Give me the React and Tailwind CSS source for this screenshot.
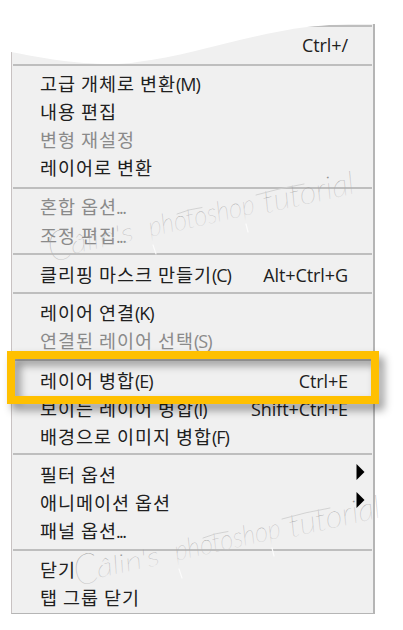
const groups = [
  {
    box: "h-[121px] pt-[3px]",
    row: "h-7",
    items: [
      { label: "고급 개체로 변환", hotkey: "(M)" },
      { label: "내용 편집" },
      { label: "변형 재설정", disabled: true },
      { label: "레이어로 변환" },
    ],
  },
  {
    box: "h-16 pt-[3px]",
    row: "h-[29px]",
    items: [
      { label: "혼합 옵션", hotkey: "...", disabled: true },
      { label: "조정 편집", hotkey: "...", disabled: true },
    ],
  },
  {
    box: "h-[37px] pt-[5px]",
    row: "h-7",
    items: [{ label: "클리핑 마스크 만들기", hotkey: "(C)", shortcut: "Alt+Ctrl+G" }],
  },
  {
    box: "h-[65px] pt-[4px]",
    row: "h-7",
    items: [
      { label: "레이어 연결", hotkey: "(K)" },
      { label: "연결된 레이어 선택", hotkey: "(S)", disabled: true },
    ],
  },
  {
    box: "h-[92px] pt-[5px]",
    row: "h-7",
    items: [
      { label: "레이어 병합", hotkey: "(E)", shortcut: "Ctrl+E", selected: true },
      { label: "보이는 레이어 병합", hotkey: "(I)", shortcut: "Shift+Ctrl+E" },
      { label: "배경으로 이미지 병합", hotkey: "(F)" },
    ],
  },
  {
    box: "h-[94px] pt-[5px]",
    row: "h-7",
    items: [
      { label: "필터 옵션", submenu: true },
      { label: "애니메이션 옵션", submenu: true },
      { label: "패널 옵션", hotkey: "..." },
    ],
  },
  {
    box: "h-[62px] pt-[4px]",
    row: "h-7",
    items: [{ label: "닫기" }, { label: "탭 그룹 닫기" }],
  },
];

function Separator() {
  return <div className="mx-px h-[2px] shrink-0 bg-[#bebebe]" />;
}

function MenuItem({ item, row }) {
  return (
    <div
      className={`relative flex items-center justify-between pr-[25px] pl-7 whitespace-nowrap ${row} ${
        item.disabled ? "text-[#8a8a8a]" : "text-[#202020]"
      }`}
    >
      <span className="flex items-baseline leading-none">
        <span className="text-[18.5px] tracking-[0.95px]">{item.label}</span>
        {item.hotkey && (
          <span
            className={
              item.hotkey === "..."
                ? "-ml-px font-['Open_Sans'] text-[18px] tracking-[-1.6px]"
                : "font-['Open_Sans'] text-[18px] tracking-[-1px]"
            }
          >
            {item.hotkey}
          </span>
        )}
      </span>
      {item.shortcut && (
        <span className="pt-px font-['Open_Sans'] text-[18px] leading-none tracking-[-0.1px]">{item.shortcut}</span>
      )}
      {item.submenu && (
        <svg className="absolute top-[4px] right-[8px]" width="9" height="16" viewBox="0 0 9 16">
          <path d="M0.5 0L8.5 8L0.5 16Z" fill="#000" />
        </svg>
      )}
      {item.selected && (
        <div className="absolute -top-[15px] -left-[5px] z-10 h-[53px] w-[372px] border-x-[8px] border-y-[8px] border-[#ffc000] drop-shadow-[5px_6px_4px_rgba(0,0,0,0.4)]" />
      )}
    </div>
  );
}

function Watermark({ id, x, y }) {
  return (
    <g transform={`translate(${x} ${y})`}>
      <defs>
        <linearGradient id={id} x1="0" y1="0" x2="0" y2="1">
          <stop offset="0.2" stopColor="#8c8c8c" />
          <stop offset="0.75" stopColor="#b8b8b8" />
          <stop offset="1" stopColor="#f4f4f4" />
        </linearGradient>
      </defs>
      <g
        transform="rotate(-12.5)"
        fill={`url(#${id})`}
        fontFamily="Lato, sans-serif"
        fontStyle="italic"
        fontWeight="100"
      >
        <text x="0" y="3" fontSize="42" textLength="24" lengthAdjust="spacingAndGlyphs">C</text>
        <text x="23" y="0" fontSize="26" textLength="64" lengthAdjust="spacingAndGlyphs">âlin's</text>
        <text x="103" y="0" fontSize="28" textLength="108" lengthAdjust="spacingAndGlyphs">photoshop</text>
        <text x="220" y="2" fontSize="32" textLength="93" lengthAdjust="spacingAndGlyphs">tutorial</text>
      </g>
      {/* pen flourishes */}
      <g fill="none" strokeLinecap="round">
        <path d="M127 -45Q139 -50 152 -51.5M206 -64Q230 -71 254 -75" stroke="#cfcfcf" strokeWidth="0.9" />
        <path d="M103 -14L106 -5M196 -35L198 -27" stroke="#fcfcfc" strokeWidth="1.1" />
      </g>
    </g>
  );
}

export default function App() {
  return (
    <div className="relative h-[630px] w-[403px] overflow-hidden bg-white pt-6 pl-[11px] font-['Noto_Sans_CJK_KR',sans-serif]">
      <div className="flex h-[590px] w-[364px] flex-col border-r-2 border-b border-l border-[#b5b5b5] border-l-[#c8c2c2] bg-[#f0f0f0]">
        <div className="flex h-10 shrink-0 flex-col pt-px">
          <Separator />
          <div className="flex h-[37px] items-center justify-end pr-[25px] font-['Open_Sans'] text-[18px] tracking-[-0.1px] text-[#202020]">
            Ctrl+/
          </div>
        </div>
        {groups.map((group) => (
          <div key={group.items[0].label} className="shrink-0">
            <Separator />
            <div className={group.box}>
              {group.items.map((item) => (
                <MenuItem key={item.label} item={item} row={group.row} />
              ))}
            </div>
          </div>
        ))}
      </div>

      {/* torn top edge and signature over the menu */}
      <svg className="pointer-events-none absolute inset-0" width="403" height="630" viewBox="0 0 403 630">
        <path d="M0 0H403V23H371C345 24 327 25 307 27C250 34 190 56 137 62C122 65 100 64 84 63C57 61 33 56 11 52H0Z" fill="#fff" />
        <Watermark id="inkTop" x={50} y={259} />
        <Watermark id="inkBottom" x={76} y={583} />
      </svg>
    </div>
  );
}
